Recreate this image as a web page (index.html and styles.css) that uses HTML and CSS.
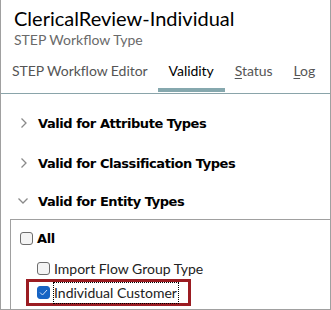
FILE: index.html
```html
<!DOCTYPE html>
<html>
<head>
<meta charset="utf-8">
<link rel="stylesheet" href="styles.css">
</head>
<body>
<div class="panel">
  <header class="head">
    <h1 class="title">ClericalReview-Individual</h1>
    <div class="subtitle">STEP Workflow Type</div>
  </header>
  <nav class="tabs">
    <span class="tab">STEP Workflow Editor</span>
    <span class="tab active">Validity</span>
    <span class="tab"><u>S</u>tatus</span>
    <span class="tab"><u>L</u>og</span>
  </nav>
  <section class="content">
    <div class="group">
      <svg class="chev" width="8" height="12" viewBox="0 0 8 12"><path d="M1.5 1.5 L6 6 L1.5 10.5" fill="none" stroke="#8a8a8a" stroke-width="1.3"/></svg>
      <span class="glabel">Valid for Attribute Types</span>
    </div>
    <div class="group">
      <svg class="chev" width="8" height="12" viewBox="0 0 8 12"><path d="M1.5 1.5 L6 6 L1.5 10.5" fill="none" stroke="#8a8a8a" stroke-width="1.3"/></svg>
      <span class="glabel">Valid for Classification Types</span>
    </div>
    <div class="group open">
      <svg class="chev down" width="12" height="8" viewBox="0 0 12 8"><path d="M1.5 1.5 L6 6 L10.5 1.5" fill="none" stroke="#8a8a8a" stroke-width="1.3"/></svg>
      <span class="glabel">Valid for Entity Types</span>
    </div>
    <div class="listbox">
      <label class="row all"><span class="cb"></span><span class="ltext bold">All</span></label>
      <label class="row sub"><span class="cb"></span><span class="ltext">Import Flow Group Type</span></label>
      <div class="highlight">
        <label class="row sub checked"><span class="cb on"><svg width="9" height="7" viewBox="0 0 9 7"><path d="M1 3.5 L3.5 6 L8 1" fill="none" stroke="#cfe0f7" stroke-width="1"/></svg></span><span class="ltext focus">Individual Customer</span></label>
      </div>
    </div>
  </section>
</div>
</body>
</html>
```

FILE: styles.css
```css
* { box-sizing: border-box; }
html, body { margin: 0; padding: 0; background: #fff; }
body { width: 331px; height: 310px; overflow: hidden; }
.panel {
  width: 331px;
  height: 310px;
  border-left: 1px solid #a0a0a0;
  border-right: 1px solid #a0a0a0;
  border-bottom: 1px solid #a0a0a0;
  display: flex;
  flex-direction: column;
  font-family: "Lato", "Open Sans", sans-serif;
}
.head { padding: 5px 0 0 13px; height: 49px; flex: none; }
.title {
  margin: 0;
  font-weight: 400;
  font-size: 20px;
  line-height: 26px;
  color: #000;
}
.subtitle {
  font-size: 14px;
  line-height: 18px;
  color: #6a6a6a;
}
.tabs {
  display: flex;
  flex: none;
  height: 45px;
  border-bottom: 1px solid #8aa4aa;
  padding-left: 11px;
}
.tab {
  flex: none;
  white-space: nowrap;
  font-size: 14px;
  letter-spacing: -0.05px;
  color: #555;
  line-height: 20px;
  padding-top: 12px;
  margin-right: 21px;
  position: relative;
}
.tab u { text-decoration: underline; text-underline-offset: 2px; }
.tab.active { color: #000; }
.tab.active::after {
  content: "";
  position: absolute;
  left: -11px;
  right: -11px;
  bottom: 1px;
  height: 4px;
  background: #86a8ae;
}
.content { flex: 1; display: flex; flex-direction: column; padding-top: 9px; }
.group {
  display: flex;
  align-items: center;
  height: 40px;
  flex: none;
  padding-left: 19px;
}
.group.open { padding-left: 16px; height: 36px; }
.chev { flex: none; margin-right: 10px; }
.chev.down { margin-right: 9px; }
.glabel {
  font-family: "DejaVu Sans", sans-serif;
  font-weight: 700;
  font-size: 13px;
  letter-spacing: -0.45px;
  color: #000;
}
.listbox {
  flex: 1;
  margin-left: 9px;
  border-top: 1px solid #a0a0a0;
  border-left: 1px solid #a0a0a0;
  padding-top: 12px;
  padding-left: 9px;
}
.row {
  display: flex;
  align-items: center;
  height: 13px;
}
.row.sub { padding-left: 17px; margin-top: 17px; }
.cb {
  width: 13px;
  height: 13px;
  border: 1px solid #6d6d6d;
  border-radius: 3px;
  background: #f4f4f4;
  flex: none;
  margin-right: 4px;
  display: flex;
  align-items: center;
  justify-content: center;
}
.cb.on { background: #1764c4; border-color: #1764c4; }
.ltext {
  font-size: 14px;
  color: #222;
  line-height: 18px;
}
.ltext.bold {
  font-family: "DejaVu Sans", sans-serif;
  font-weight: 700;
  font-size: 13px;
  letter-spacing: -0.4px;
  color: #000;
}
.ltext.focus { outline: 1px dotted #000; line-height: 20px; padding-right: 1px; }
.highlight {
  margin-left: 6px;
  margin-top: 4px;
  width: 165px;
  height: 27px;
  border: 3px solid #9b1c22;
  display: flex;
  align-items: center;
}
.highlight .row.sub { margin-top: 0; padding-left: 8px; }
```
